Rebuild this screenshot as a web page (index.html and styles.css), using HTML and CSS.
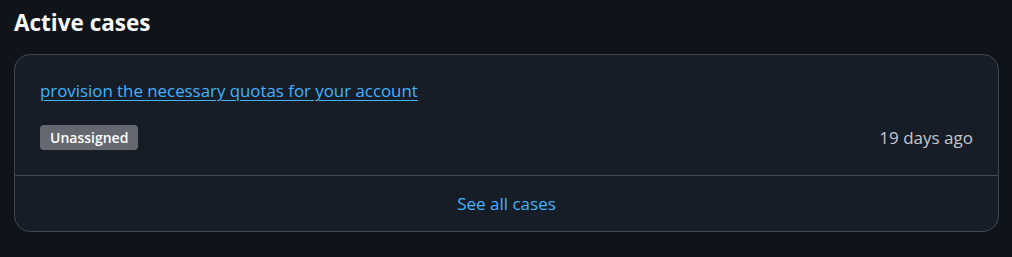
FILE: index.html
```html
<!DOCTYPE html>
<html>
<head>
<meta charset="utf-8">
<link rel="stylesheet" href="styles.css">
</head>
<body>
<section class="panel">
  <h2 class="panel-title">Active cases</h2>
  <div class="card">
    <div class="card-body">
      <a class="case-link" href="#">provision the necessary quotas for your account</a>
      <div class="case-meta">
        <span class="badge">Unassigned</span>
        <span class="case-age">19 days ago</span>
      </div>
    </div>
    <div class="card-footer">
      <a class="footer-link" href="#">See all cases</a>
    </div>
  </div>
</section>
</body>
</html>
```

FILE: styles.css
```css
html, body {
  margin: 0;
  padding: 0;
  background: #0f141a;
}
body {
  font-family: "Open Sans", "Noto Sans", sans-serif;
  color: #c6c6cd;
}
.panel {
  padding: 9px 13px 0 14px;
}
.panel-title {
  margin: 0 0 17px 0;
  font-size: 22.5px;
  line-height: 28px;
  font-weight: 700;
  color: #f9f9fa;
}
.card {
  border: 1px solid #414752;
  border-radius: 16px;
  background: #161d26;
}
.card-body {
  padding: 25px 25px 25px 25px;
}
.case-link {
  display: inline-block;
  font-size: 16.85px;
  line-height: 22px;
  font-weight: 500;
  color: #42b4ff;
  text-decoration: underline;
  text-underline-offset: 3px;
  text-decoration-thickness: 1px;
}
.case-meta {
  margin-top: 23px;
  display: flex;
  justify-content: space-between;
  align-items: center;
}
.badge {
  display: inline-flex;
  align-items: center;
  height: 25px;
  padding: 0 10px;
  border-radius: 4px;
  background: #656871;
  color: #ffffff;
  font-size: 14px;
  font-weight: 600;
}
.case-age {
  font-size: 17px;
  font-weight: 500;
  color: #c6c6cd;
}
.card-footer {
  border-top: 1px solid #414752;
  height: 55px;
  display: flex;
  align-items: center;
  justify-content: center;
}
.footer-link {
  font-size: 17px;
  font-weight: 500;
  color: #42b4ff;
  text-decoration: none;
}
```
